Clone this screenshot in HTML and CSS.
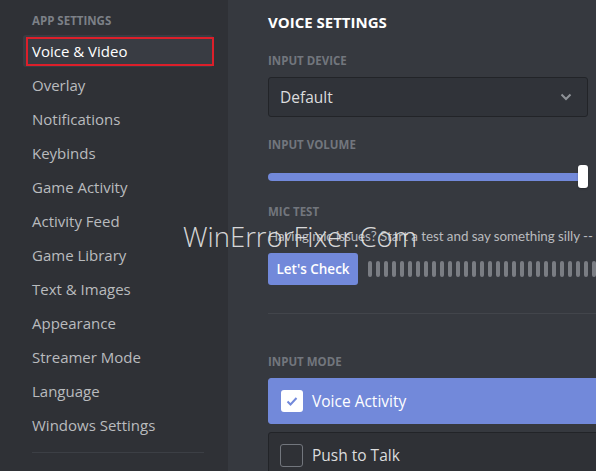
FILE: index.html
```html
<!DOCTYPE html>
<html>
<head>
<meta charset="utf-8">
<link rel="stylesheet" href="styles.css">
</head>
<body>
<div class="app">
  <nav class="sidebar">
    <div class="side-header">App Settings</div>
    <div class="side-item selected">Voice &amp; Video</div>
    <div class="side-item">Overlay</div>
    <div class="side-item">Notifications</div>
    <div class="side-item">Keybinds</div>
    <div class="side-item">Game Activity</div>
    <div class="side-item">Activity Feed</div>
    <div class="side-item">Game Library</div>
    <div class="side-item">Text &amp; Images</div>
    <div class="side-item">Appearance</div>
    <div class="side-item">Streamer Mode</div>
    <div class="side-item">Language</div>
    <div class="side-item">Windows Settings</div>
    <div class="side-sep"></div>
    <div class="side-item">Change Log</div>
  </nav>
  <main class="content">
    <div class="inner">
      <h2 class="title">Voice Settings</h2>
      <div class="col">
        <div class="label l-device">Input Device</div>
        <div class="select">
          <span>Default</span>
          <svg class="chev" width="12" height="8" viewBox="0 0 12 8"><path d="M1.5 1.5 L6 6 L10.5 1.5" fill="none" stroke="#8e9297" stroke-width="2"/></svg>
        </div>
        <div class="label l-volume">Input Volume</div>
        <div class="slider">
          <div class="track"></div>
          <div class="thumb"></div>
        </div>
      </div>
      <div class="label l-mic">Mic Test</div>
      <div class="desc">Having mic issues? Start a test and say something silly -- we'll play your voice back to you.</div>
      <div class="mic-row">
        <button class="btn">Let's Check</button>
        <div class="bars">
          <i></i><i></i><i></i><i></i><i></i><i></i><i></i><i></i><i></i><i></i>
          <i></i><i></i><i></i><i></i><i></i><i></i><i></i><i></i><i></i><i></i>
          <i></i><i></i><i></i><i></i><i></i><i></i><i></i><i></i><i></i><i></i>
        </div>
      </div>
      <div class="sep"></div>
      <div class="label l-mode">Input Mode</div>
      <div class="radio active">
        <span class="box checked"><svg width="22" height="22" viewBox="0 0 22 22"><path d="M6.5 11.5 L9.5 14.5 L15.5 8" fill="none" stroke="#7289da" stroke-width="2"/></svg></span>
        <span>Voice Activity</span>
      </div>
      <div class="radio">
        <span class="box"></span>
        <span>Push to Talk</span>
      </div>
    </div>
  </main>
</div>
<div class="watermark">WinErrorFixer.Com</div>
</body>
</html>
```
FILE: styles.css
```css
html, body {
  margin: 0;
  padding: 0;
  height: 100%;
  overflow: hidden;
  background: #36393f;
  font-family: "Open Sans", "Noto Sans", sans-serif;
}
.app {
  display: flex;
  height: 471px;
}
.sidebar {
  width: 228px;
  flex: none;
  background: #2f3136;
  box-sizing: border-box;
  padding: 13px 15px 0 23px;
  display: flex;
  flex-direction: column;
}
.side-header {
  font-size: 11.5px;
  font-weight: 700;
  text-transform: uppercase;
  color: #7c8087;
  line-height: 16px;
  padding-left: 9px;
  margin-bottom: 6px;
}
.side-item {
  position: relative;
  height: 32px;
  line-height: 32px;
  margin-bottom: 2px;
  padding-left: 9px;
  font-size: 15px;
  font-weight: 500;
  color: #b9bbbe;
  border-radius: 3px;
  white-space: nowrap;
  flex: none;
}
.side-item.selected {
  background: #393c43;
  color: #ffffff;
}
.side-item.selected::after {
  content: "";
  position: absolute;
  left: 3px;
  top: 2px;
  right: -1px;
  bottom: 1px;
  border: 2px solid #dc1f2a;
}
.side-sep {
  height: 1px;
  background: #3c3f45;
  margin: 9px 9px 8px 9px;
  flex: none;
}
.content {
  flex: 1;
  overflow: hidden;
  padding: 12px 0 0 40px;
}
.inner {
  width: 660px;
}
.title {
  margin: 0;
  font-size: 15px;
  font-weight: 700;
  line-height: 20px;
  text-transform: uppercase;
  color: #ffffff;
}
.col {
  width: 320px;
}
.label {
  font-size: 11.5px;
  font-weight: 700;
  text-transform: uppercase;
  color: #72767d;
  line-height: 16px;
}
.l-device { margin-top: 21px; margin-bottom: 8px; }
.select {
  height: 40px;
  box-sizing: border-box;
  background: #303339;
  border: 1px solid #222428;
  border-radius: 3px;
  display: flex;
  align-items: center;
  justify-content: space-between;
  padding: 0 15px 0 11px;
  font-size: 15.5px;
  color: #dcddde;
}
.chev { display: block; }
.l-volume { margin-top: 20px; }
.slider {
  position: relative;
  height: 24px;
  margin-top: 12px;
  display: flex;
  align-items: center;
}
.track {
  width: 314px;
  height: 8px;
  border-radius: 4px;
  background: #7289da;
}
.thumb {
  position: absolute;
  right: 0;
  top: 0;
  width: 10px;
  height: 23px;
  background: #ffffff;
  border-radius: 3px;
  box-shadow: 0 1px 2px rgba(0,0,0,0.3);
}
.l-mic { margin-top: 15px; }
.desc {
  margin-top: 6px;
  font-family: "Lato", "Open Sans", sans-serif;
  font-size: 13.4px;
  letter-spacing: -0.05px;
  line-height: 20px;
  color: #b9bbbe;
  white-space: nowrap;
}
.mic-row {
  margin-top: 7px;
  display: flex;
  align-items: center;
  gap: 10px;
}
.btn {
  width: 90px;
  height: 32px;
  border: 0;
  border-radius: 3px;
  background: #7289da;
  color: #ffffff;
  font-family: inherit;
  font-size: 13.5px;
  font-weight: 600;
  padding: 0;
}
.bars {
  display: flex;
  gap: 4px;
}
.bars i {
  display: block;
  width: 4px;
  height: 16px;
  border-radius: 2px;
  background: #7a7d83;
}
.sep {
  margin-top: 28px;
  height: 1px;
  background: #42454b;
}
.l-mode { margin-top: 40px; margin-bottom: 8px; }
.radio {
  height: 46px;
  box-sizing: border-box;
  border-radius: 3px;
  background: #2f3136;
  border: 1px solid #222428;
  display: flex;
  align-items: center;
  gap: 9px;
  padding-left: 11px;
  margin-bottom: 8px;
  font-size: 15.5px;
  font-weight: 500;
  color: #dcddde;
}
.radio.active {
  background: #7289da;
  border-color: #7289da;
  color: #ffffff;
}
.box {
  width: 23px;
  height: 23px;
  box-sizing: border-box;
  border: 1px solid #72767d;
  border-radius: 3px;
  flex: none;
}
.box.checked {
  width: 22px;
  height: 22px;
  border: 0;
  background: #ffffff;
  margin-left: 1px;
}
.box svg { display: block; }
.watermark {
  position: absolute;
  left: 183px;
  top: 218px;
  font-family: "Open Sans", sans-serif;
  font-weight: 300;
  font-size: 27.5px;
  line-height: 37px;
  color: rgba(232, 232, 232, 0.92);
  white-space: nowrap;
  pointer-events: none;
}
```
